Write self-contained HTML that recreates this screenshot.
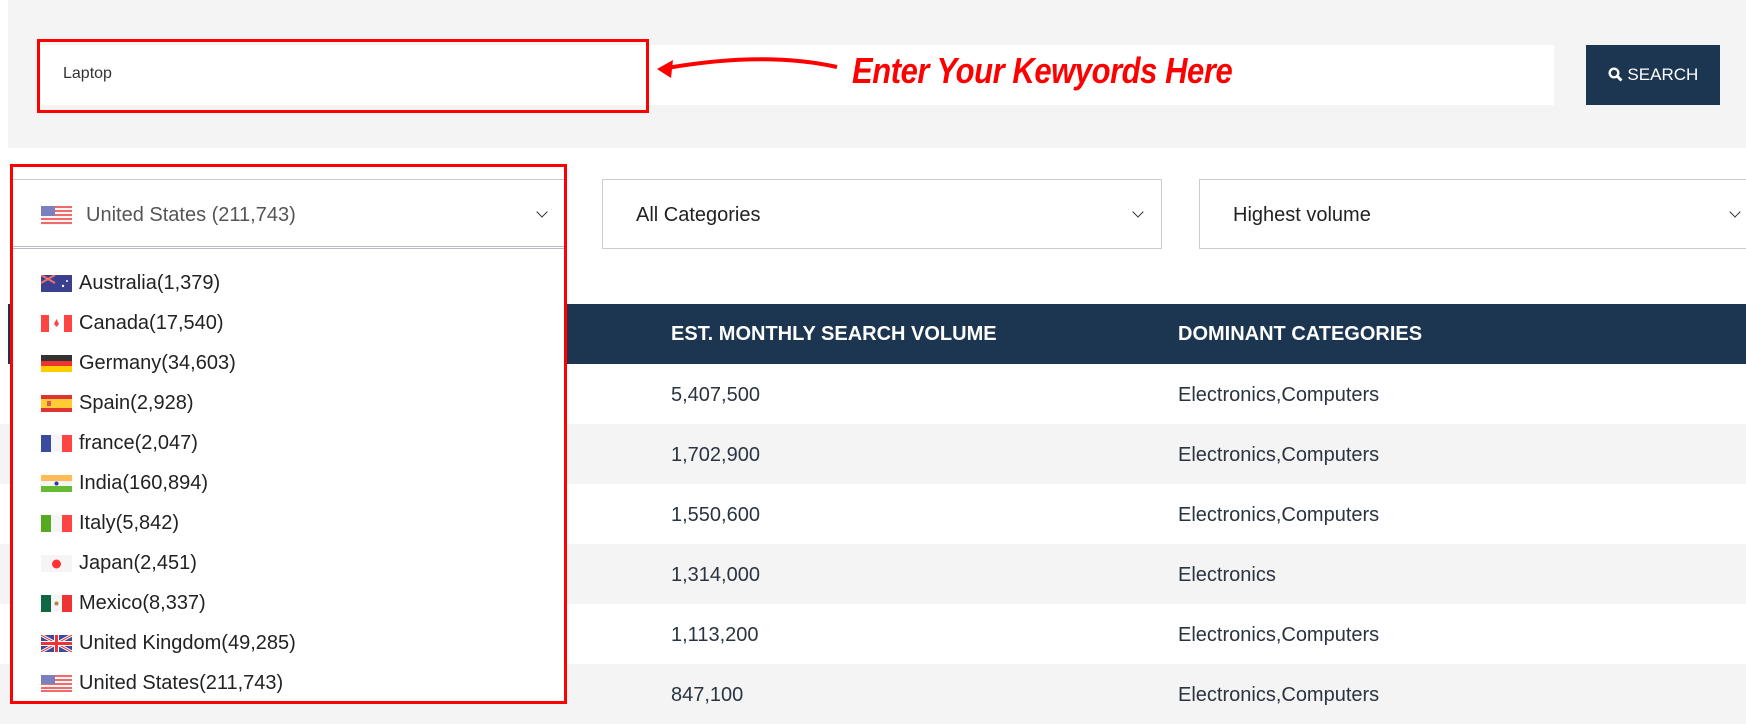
<!DOCTYPE html>
<html><head><meta charset="utf-8"><style>
*{margin:0;padding:0;box-sizing:border-box}
body{width:1746px;height:706px;overflow:hidden;background:#fff;font-family:"Liberation Sans",Arial,sans-serif;position:relative;color:#333}
.a{position:absolute}
.row{position:absolute;left:0;width:1746px;height:60px}
.cell{position:absolute;font-size:20px;color:#2a3440;line-height:62px}
.dd{position:absolute;top:179px;height:70px;border:1px solid #c9ccd0;background:#fff;font-size:20px;line-height:70px;color:#222}
.chev{position:absolute;top:28px;width:8px;height:8px;border-right:1.5px solid #333;border-bottom:1.5px solid #333;transform:rotate(45deg)}
.item{position:absolute;left:41px;height:24px;font-size:20px;line-height:26px;color:#222}
.item svg{position:absolute;left:0;top:5px}
.item span{position:absolute;left:38px;white-space:nowrap}
</style></head><body>
<div class="a" style="left:8px;top:0;width:1738px;height:148px;background:#f4f4f4"></div>
<div class="a" style="left:37px;top:45px;width:1517px;height:60px;background:#fff"></div>
<div class="a" style="left:37px;top:39px;width:612px;height:74px;border:3px solid #ff0000"></div>
<div class="a" style="left:63px;top:65px;font-size:16px;color:#333">Laptop</div>
<svg class="a" style="left:655px;top:55px" width="190" height="30"><path d="M182 12 Q110 -4 12 13" stroke="#f00" stroke-width="4" fill="none"/><path d="M2 14 L18 5 L16 23 Z" fill="#f00"/></svg>
<div class="a" style="left:852px;top:50px;font-size:36px;font-weight:bold;font-style:italic;color:#ff0000;transform:scaleX(0.86);transform-origin:left;white-space:nowrap;letter-spacing:-0.5px">Enter Your Kewyords Here</div>
<div class="a" style="left:1586px;top:45px;width:134px;height:60px;background:#1c3550;color:#fff;font-size:17px;line-height:60px;text-align:center"><svg width="15" height="15" style="vertical-align:-2px"><circle cx="6" cy="6" r="4.3" stroke="#fff" stroke-width="2.4" fill="none"/><path d="M9 9 L13.5 13.5" stroke="#fff" stroke-width="2.8"/></svg> SEARCH</div>

<div class="dd" style="left:12px;width:553px;border-bottom:3px double #b7bcc2;color:#555"><svg style="position:absolute;left:28px;top:26px" width="31" height="19"><rect width="31" height="19" fill="#f5f5f5"/><g fill="#f06a6a"><rect y="0" width="31" height="2"/><rect y="4" width="31" height="2"/><rect y="8" width="31" height="2"/><rect y="12" width="31" height="2"/><rect y="16" width="31" height="2"/></g><rect width="14" height="10" fill="#7b7fc0"/></svg><span style="position:absolute;left:73px">United States (211,743)</span><div class="chev" style="left:525px"></div></div>
<div class="dd" style="left:602px;width:560px"><span style="position:absolute;left:33px">All Categories</span><div class="chev" style="left:531px"></div></div>
<div class="dd" style="left:1199px;width:560px"><span style="position:absolute;left:33px">Highest volume</span><div class="chev" style="left:531px"></div></div>

<div class="a" style="left:8px;top:304px;width:4px;height:60px;background:#1c3550"></div>
<div class="a" style="left:566px;top:304px;width:1180px;height:60px;background:#1c3550"></div>
<div class="a" style="left:671px;top:304px;line-height:60px;color:#fff;font-weight:bold;font-size:20px">EST. MONTHLY SEARCH VOLUME</div>
<div class="a" style="left:1178px;top:304px;line-height:60px;color:#fff;font-weight:bold;font-size:20px">DOMINANT CATEGORIES</div>

<div class="row" style="top:364px;background:#fff"><div class="cell" style="left:671px">5,407,500</div><div class="cell" style="left:1178px">Electronics,Computers</div></div>
<div class="row" style="top:424px;background:#f4f4f4"><div class="cell" style="left:671px">1,702,900</div><div class="cell" style="left:1178px">Electronics,Computers</div></div>
<div class="row" style="top:484px;background:#fff"><div class="cell" style="left:671px">1,550,600</div><div class="cell" style="left:1178px">Electronics,Computers</div></div>
<div class="row" style="top:544px;background:#f4f4f4"><div class="cell" style="left:671px">1,314,000</div><div class="cell" style="left:1178px">Electronics</div></div>
<div class="row" style="top:604px;background:#fff"><div class="cell" style="left:671px">1,113,200</div><div class="cell" style="left:1178px">Electronics,Computers</div></div>
<div class="row" style="top:664px;background:#f4f4f4"><div class="cell" style="left:671px">847,100</div><div class="cell" style="left:1178px">Electronics,Computers</div></div>

<div class="a" style="left:11px;top:250px;width:554px;height:453px;background:#fff"></div>

<div class="item" style="top:270px"><svg width="31" height="17"><rect width="31" height="17" fill="#3a3f8f"/><path d="M0 0L14 8M14 0L0 8" stroke="#f07070" stroke-width="2"/><circle cx="22" cy="11" r="1.2" fill="#fff"/><circle cx="26" cy="6" r="1" fill="#fff"/></svg><span>Australia(1,379)</span></div>
<div class="item" style="top:310px"><svg width="31" height="17"><rect width="31" height="17" fill="#fff"/><rect width="8" height="17" fill="#f44"/><rect x="23" width="8" height="17" fill="#f44"/><path d="M15.5 4 L18 9 L15.5 12 L13 9Z" fill="#f44"/></svg><span>Canada(17,540)</span></div>
<div class="item" style="top:350px"><svg width="31" height="17"><rect width="31" height="6" fill="#333"/><rect y="6" width="31" height="5" fill="#e33"/><rect y="11" width="31" height="6" fill="#fc0"/></svg><span>Germany(34,603)</span></div>
<div class="item" style="top:390px"><svg width="31" height="17"><rect width="31" height="17" fill="#d33"/><rect y="4" width="31" height="9" fill="#fc3"/><rect x="6" y="6" width="4" height="5" fill="#d55"/></svg><span>Spain(2,928)</span></div>
<div class="item" style="top:430px"><svg width="31" height="17"><rect width="10" height="17" fill="#3a4a9f"/><rect x="10" width="11" height="17" fill="#f5f5f5"/><rect x="21" width="10" height="17" fill="#f44"/></svg><span>france(2,047)</span></div>
<div class="item" style="top:470px"><svg width="31" height="17"><rect width="31" height="6" fill="#fb5"/><rect y="6" width="31" height="5" fill="#f5f5f5"/><rect y="11" width="31" height="6" fill="#6b3"/><circle cx="15.5" cy="8.5" r="2" fill="#33a"/></svg><span>India(160,894)</span></div>
<div class="item" style="top:510px"><svg width="31" height="17"><rect width="10" height="17" fill="#5a2"/><rect x="10" width="11" height="17" fill="#f5f5f5"/><rect x="21" width="10" height="17" fill="#f44"/></svg><span>Italy(5,842)</span></div>
<div class="item" style="top:550px"><svg width="31" height="17"><rect width="31" height="17" fill="#f5f5f5"/><circle cx="15.5" cy="9" r="4.5" fill="#f33"/></svg><span>Japan(2,451)</span></div>
<div class="item" style="top:590px"><svg width="31" height="17"><rect width="10" height="17" fill="#164"/><rect x="10" width="11" height="17" fill="#f5f5f5"/><rect x="21" width="10" height="17" fill="#e33"/><circle cx="15.5" cy="8.5" r="2" fill="#a85"/></svg><span>Mexico(8,337)</span></div>
<div class="item" style="top:630px"><svg width="31" height="17"><rect width="31" height="17" fill="#3a4a9f"/><path d="M0 0L31 17M31 0L0 17" stroke="#fff" stroke-width="3"/><path d="M0 0L31 17M31 0L0 17" stroke="#e33" stroke-width="1"/><path d="M15.5 0V17M0 8.5H31" stroke="#fff" stroke-width="5"/><path d="M15.5 0V17M0 8.5H31" stroke="#e33" stroke-width="3"/></svg><span>United Kingdom(49,285)</span></div>
<div class="item" style="top:670px"><svg width="31" height="17"><rect width="31" height="17" fill="#f5f5f5"/><g fill="#f06a6a"><rect y="0" width="31" height="2"/><rect y="4" width="31" height="2"/><rect y="8" width="31" height="2"/><rect y="12" width="31" height="2"/><rect y="15" width="31" height="2"/></g><rect width="14" height="9" fill="#7b7fc0"/></svg><span>United States(211,743)</span></div>

<div class="a" style="left:10px;top:164px;width:557px;height:540px;border:3px solid #ff0000"></div>
</body></html>
